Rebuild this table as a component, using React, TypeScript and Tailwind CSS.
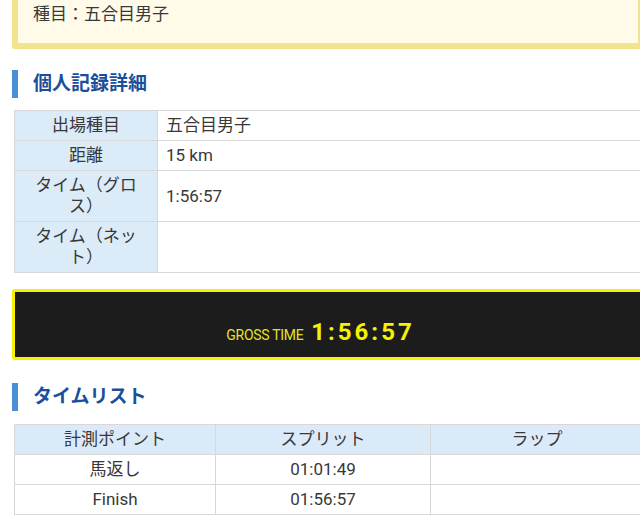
import React from 'react';

const font = { fontFamily: "Roboto, 'Noto Sans CJK JP', sans-serif" };

// section title with the blue bar on the left
function SectionTitle({ children }: { children: React.ReactNode }) {
  return (
    <div className="flex items-center gap-[15px] h-[28px]">
      <div className="w-[6px] h-[28px] bg-[#4a8fd6]" />
      <h2 className="text-[19px] font-bold text-[#1b4f9c] leading-[28px]">{children}</h2>
    </div>
  );
}

export default function App() {
  const detailRows = [
    { label: '出場種目', value: '五合目男子' },
    { label: '距離', value: '15 km' },
    { label: 'タイム（グロス）', value: '1:56:57' },
    { label: 'タイム（ネット）', value: '' },
  ];

  const splits = [
    { point: '馬返し', split: '01:01:49', lap: '' },
    { point: 'Finish', split: '01:56:57', lap: '' },
  ];

  return (
    <div className="w-[640px] h-[531px] overflow-hidden bg-white text-[#383838]" style={font}>
      <div className="w-[632px] ml-[12px]">
        {/* race info box */}
        <div className="border-[6px] border-t-0 border-[#f2e38e] bg-[#fffbe8] pl-[15px] pt-[1px] pb-[16px] rounded-b-[3px]">
          <p className="text-[17px] leading-[26px]">種目：五合目男子</p>
        </div>

        <div className="mt-[21px]">
          <SectionTitle>個人記録詳細</SectionTitle>
        </div>

        <table className="mt-[12px] ml-[2px] w-[630px] border-collapse table-fixed text-[17px] leading-[21px]">
          <tbody>
            {detailRows.map((r) => (
              <tr key={r.label}>
                <th className="w-[143px] border border-[#d8d8d8] bg-[#dcebf8] font-normal text-center px-[14px] py-[4px]">
                  {r.label}
                </th>
                <td className="border border-[#d8d8d8] px-[8px] py-[4px]">{r.value}</td>
              </tr>
            ))}
          </tbody>
        </table>

        {/* gross time panel */}
        <div className="mt-[16px] border-[3px] border-[#f7f200] rounded-[3px] bg-[#1c1c1c] h-[71px] flex items-end justify-center pr-[15px] pb-[11px]">
          <div className="flex items-baseline gap-[8px]">
            <span className="text-[14px] text-[#e4e22a] tracking-[-0.3px]">GROSS TIME</span>
            <span className="text-[24px] font-bold text-[#f5f200] tracking-[3px] leading-[28px]">1:56:57</span>
          </div>
        </div>

        <div className="mt-[23px]">
          <SectionTitle>タイムリスト</SectionTitle>
        </div>

        <table className="mt-[13px] ml-[2px] w-[630px] border-collapse table-fixed text-[17px] leading-[21px] text-center">
          <thead>
            <tr className="bg-[#dbeaf8]">
              <th className="w-[201px] border border-[#d8d8d8] font-normal py-[4px]">計測ポイント</th>
              <th className="w-[215px] border border-[#d8d8d8] font-normal py-[4px]">スプリット</th>
              <th className="border border-[#d8d8d8] font-normal py-[4px]">ラップ</th>
            </tr>
          </thead>
          <tbody>
            {splits.map((s) => (
              <tr key={s.point}>
                <td className="border border-[#d8d8d8] py-[4px]">{s.point}</td>
                <td className="border border-[#d8d8d8] py-[4px]">{s.split}</td>
                <td className="border border-[#d8d8d8] py-[4px]">{s.lap}</td>
              </tr>
            ))}
          </tbody>
        </table>
      </div>
    </div>
  );
}
